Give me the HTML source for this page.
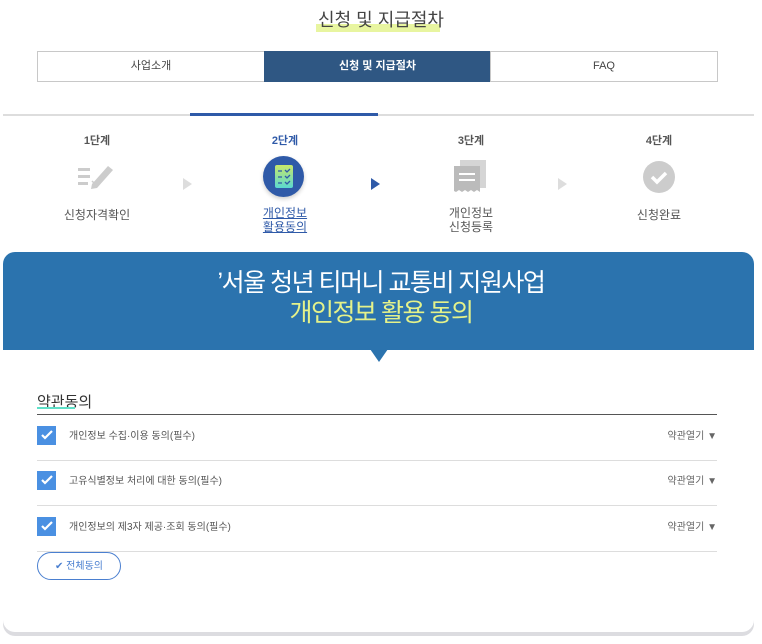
<!DOCTYPE html>
<html><head><meta charset="utf-8"><style>
*{margin:0;padding:0;box-sizing:border-box}
body{width:762px;height:644px;background:#fff;font-family:"Liberation Sans","Noto Sans CJK KR",sans-serif;position:relative;overflow:hidden;color:#333}
.a{position:absolute}
.tab{position:absolute;top:51px;height:31px;border:1px solid #c8c8c8;font-size:11px;text-align:center;line-height:29px;color:#444}
.step{position:absolute;width:120px;text-align:center;font-size:11px;color:#555}
.arr{position:absolute;width:0;height:0;border-top:6px solid transparent;border-bottom:6px solid transparent;border-left:9px solid #ddd}
.row{position:absolute;left:37px;width:680px;height:46px;border-bottom:1px solid #ddd}
.cb{position:absolute;left:0;top:11px;width:19px;height:19px;background:#4a90e2}
.row .t{position:absolute;left:32px;top:12px;font-size:10px;color:#555}
.row .o{position:absolute;right:0;top:12px;font-size:10px;color:#666}
</style></head><body>
<div class="a" style="left:316px;top:24px;width:124px;height:8px;background:#e8f5a0"></div>
<div class="a" style="left:0;width:762px;top:6px;text-align:center;font-size:18px;color:#444">신청 및 지급절차</div>
<div class="tab" style="left:37px;width:228px">사업소개</div>
<div class="tab" style="left:264px;width:227px;background:#2f5783;border-color:#2f5783;color:#fff;font-weight:bold">신청 및 지급절차</div>
<div class="tab" style="left:490px;width:228px">FAQ</div>
<div class="a" style="left:3px;top:114px;width:751px;height:2px;background:#ddd"></div>
<div class="a" style="left:190px;top:113px;width:188px;height:3px;background:#2f5aa8"></div>

<div class="step" style="left:37px;top:132px;font-weight:bold">1단계</div>
<div class="step" style="left:225px;top:132px;font-weight:bold;color:#2f5aa8">2단계</div>
<div class="step" style="left:411px;top:132px;font-weight:bold">3단계</div>
<div class="step" style="left:599px;top:132px;font-weight:bold">4단계</div>

<svg class="a" style="left:78px;top:162px" width="36" height="28"><g fill="#ccc"><rect x="0" y="6" width="12" height="3"/><rect x="0" y="13" width="12" height="3"/><rect x="0" y="20" width="10" height="3"/><path d="M14 22 L30 4 L35 8 L19 26 L13 27Z"/></g><path d="M14 19l3 3 5-5" stroke="#ccc" stroke-width="1.5" fill="none"/></svg>
<div class="a" style="left:263px;top:156px;width:41px;height:41px;border-radius:50%;background:#2f5aa8;box-shadow:0 2px 4px rgba(0,0,0,.2)"></div>
<div class="a" style="left:275px;top:165px;width:18px;height:23px;background:linear-gradient(#c8e86a,#5ad8d0);border-radius:2px"></div>
<svg class="a" style="left:275px;top:165px" width="18" height="23"><g stroke="#2f5aa8" stroke-width="1.3" fill="none"><path d="M3 6h4M10 5l2 2 3-3M3 12h4M10 11l2 2 3-3M3 18h4M10 17l2 2 3-3"/></g></svg>
<svg class="a" style="left:454px;top:160px" width="34" height="34"><rect x="6" y="0" width="26" height="28" fill="#d5d5d5"/><path d="M0 6h26v26l-3-2-3 2-3-2-3 2-3-2-3 2-3-2-3 2-2-1Z" fill="#bbb"/><g stroke="#fff" stroke-width="2"><path d="M5 14h16M5 20h16"/></g></svg>
<svg class="a" style="left:643px;top:161px" width="32" height="32"><circle cx="16" cy="16" r="16" fill="#ccc"/><path d="M9 16l5 5 9-9" stroke="#fff" stroke-width="3.5" fill="none"/></svg>

<div class="arr" style="left:183px;top:178px"></div>
<div class="arr" style="left:371px;top:178px;border-left-color:#2f5aa8"></div>
<div class="arr" style="left:558px;top:178px"></div>

<div class="step" style="left:37px;top:206px;font-size:12px">신청자격확인</div>
<div class="step" style="left:225px;top:206px;font-size:12px;color:#2f5aa8;text-decoration:underline;line-height:14px">개인정보<br>활용동의</div>
<div class="step" style="left:411px;top:206px;font-size:12px;line-height:14px">개인정보<br>신청등록</div>
<div class="step" style="left:599px;top:206px;font-size:12px">신청완료</div>

<div class="a" style="left:3px;top:252px;width:751px;height:380px;border-radius:12px;box-shadow:0 4px 0 #dcdce0"></div>
<div class="a" style="left:3px;top:252px;width:751px;height:98px;background:#2b73ae;border-radius:12px 12px 0 0"></div>
<div class="a" style="left:370px;top:349px;width:0;height:0;border-left:9px solid transparent;border-right:9px solid transparent;border-top:13px solid #2b73ae"></div>
<div class="a" style="left:0;width:762px;top:268px;text-align:center;font-size:25px;color:#fff;letter-spacing:-1.5px;line-height:30px">ʼ서울 청년 티머니 교통비 지원사업<br><span style="color:#e4f28a">개인정보 활용 동의</span></div>

<div class="a" style="left:37px;top:391px;font-size:15px;color:#333">약관동의</div>
<div class="a" style="left:37px;top:407px;width:38px;height:2px;background:#5ee0c8"></div>
<div class="a" style="left:37px;top:414px;width:680px;height:1px;background:#555"></div>
<div class="row" style="top:415px"><div class="cb"></div><svg class="a" style="left:3px;top:14px" width="14" height="12"><path d="M2 6l3 3 7-7" stroke="#fff" stroke-width="2.2" fill="none"/></svg><div class="t">개인정보 수집·이용 동의(필수)</div><div class="o">약관열기 ▼</div></div>
<div class="row" style="top:460px"><div class="cb"></div><svg class="a" style="left:3px;top:14px" width="14" height="12"><path d="M2 6l3 3 7-7" stroke="#fff" stroke-width="2.2" fill="none"/></svg><div class="t">고유식별정보 처리에 대한 동의(필수)</div><div class="o">약관열기 ▼</div></div>
<div class="row" style="top:506px"><div class="cb"></div><svg class="a" style="left:3px;top:14px" width="14" height="12"><path d="M2 6l3 3 7-7" stroke="#fff" stroke-width="2.2" fill="none"/></svg><div class="t">개인정보의 제3자 제공·조회 동의(필수)</div><div class="o">약관열기 ▼</div></div>
<div class="a" style="left:37px;top:552px;width:84px;height:28px;border:1px solid #4a7fd0;border-radius:14px;font-size:10px;color:#4a7fd0;text-align:center;line-height:28px">✔ 전체동의</div>
</body></html>
